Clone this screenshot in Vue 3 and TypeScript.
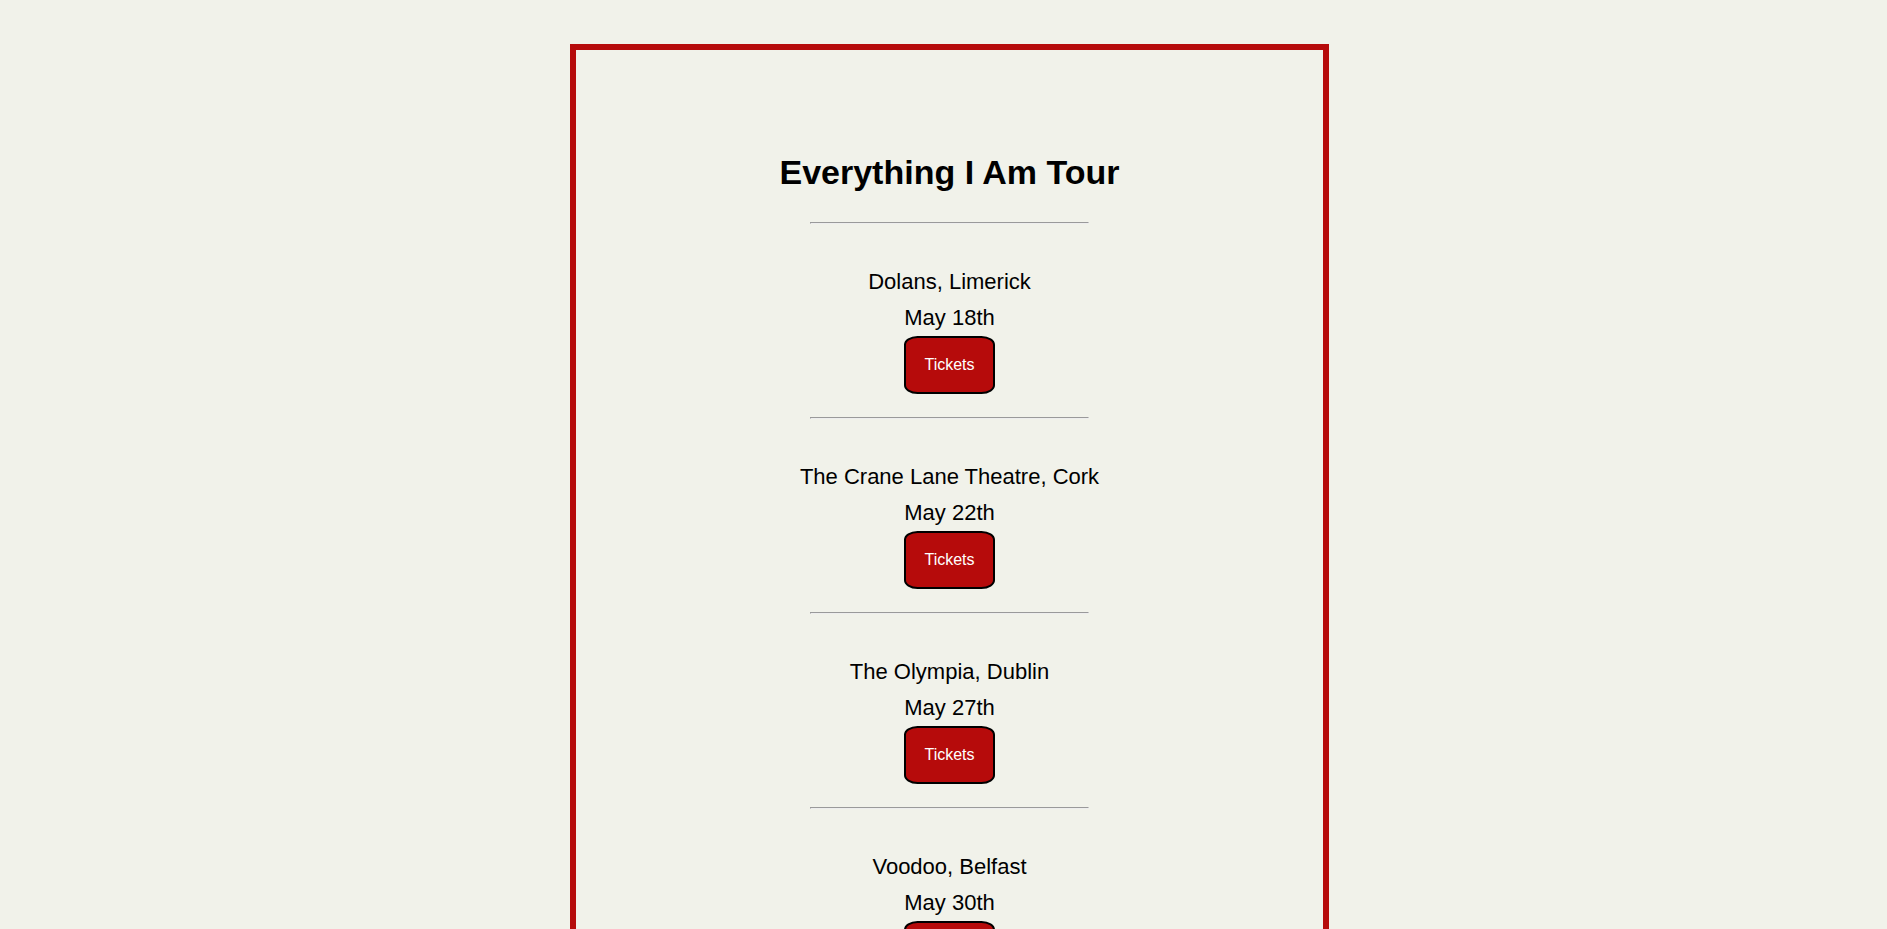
<script setup lang="ts">
interface Show {
  venue: string
  date: string
}

const shows: Show[] = [
  { venue: 'Dolans, Limerick', date: 'May 18th' },
  { venue: 'The Crane Lane Theatre, Cork', date: 'May 22th' },
  { venue: 'The Olympia, Dublin', date: 'May 27th' },
  { venue: 'Voodoo, Belfast', date: 'May 30th' },
]
</script>

<template>
  <div class="page">
    <main class="tour">
      <h1>Everything I Am Tour</h1>
      <section v-for="show in shows" :key="show.venue" class="show">
        <hr />
        <p>{{ show.venue }}<br />{{ show.date }}</p>
        <button type="button">Tickets</button>
      </section>
    </main>
  </div>
</template>

<style>
body {
  margin: 0;
  background: #f1f2ea;
}
</style>

<style scoped>
.page {
  padding: 44px 0 44px 12px;
}

.tour {
  box-sizing: border-box;
  width: 100%;
  max-width: 759px;
  margin: 0 auto;
  padding: 100px 80px;
  border: 6px solid #b60b0b;
  color: #000;
  font-family: "Liberation Sans", Arial, sans-serif;
  font-size: 22px;
  line-height: 36px;
  text-align: center;
}

h1 {
  margin: 0 0 28px;
  font-size: 34px;
  line-height: 44px;
}

.show {
  margin-bottom: 23px;
}

hr {
  width: 277px;
  margin: 0 auto 40px;
}

p {
  margin: 0;
}

button {
  display: block;
  margin: 0 auto;
  padding: 18px;
  border: 2px solid #000;
  border-radius: 15%;
  background: #b60b0b;
  color: #fff;
  font-family: inherit;
  font-size: 16px;
  line-height: 18px;
  cursor: pointer;
}
</style>
